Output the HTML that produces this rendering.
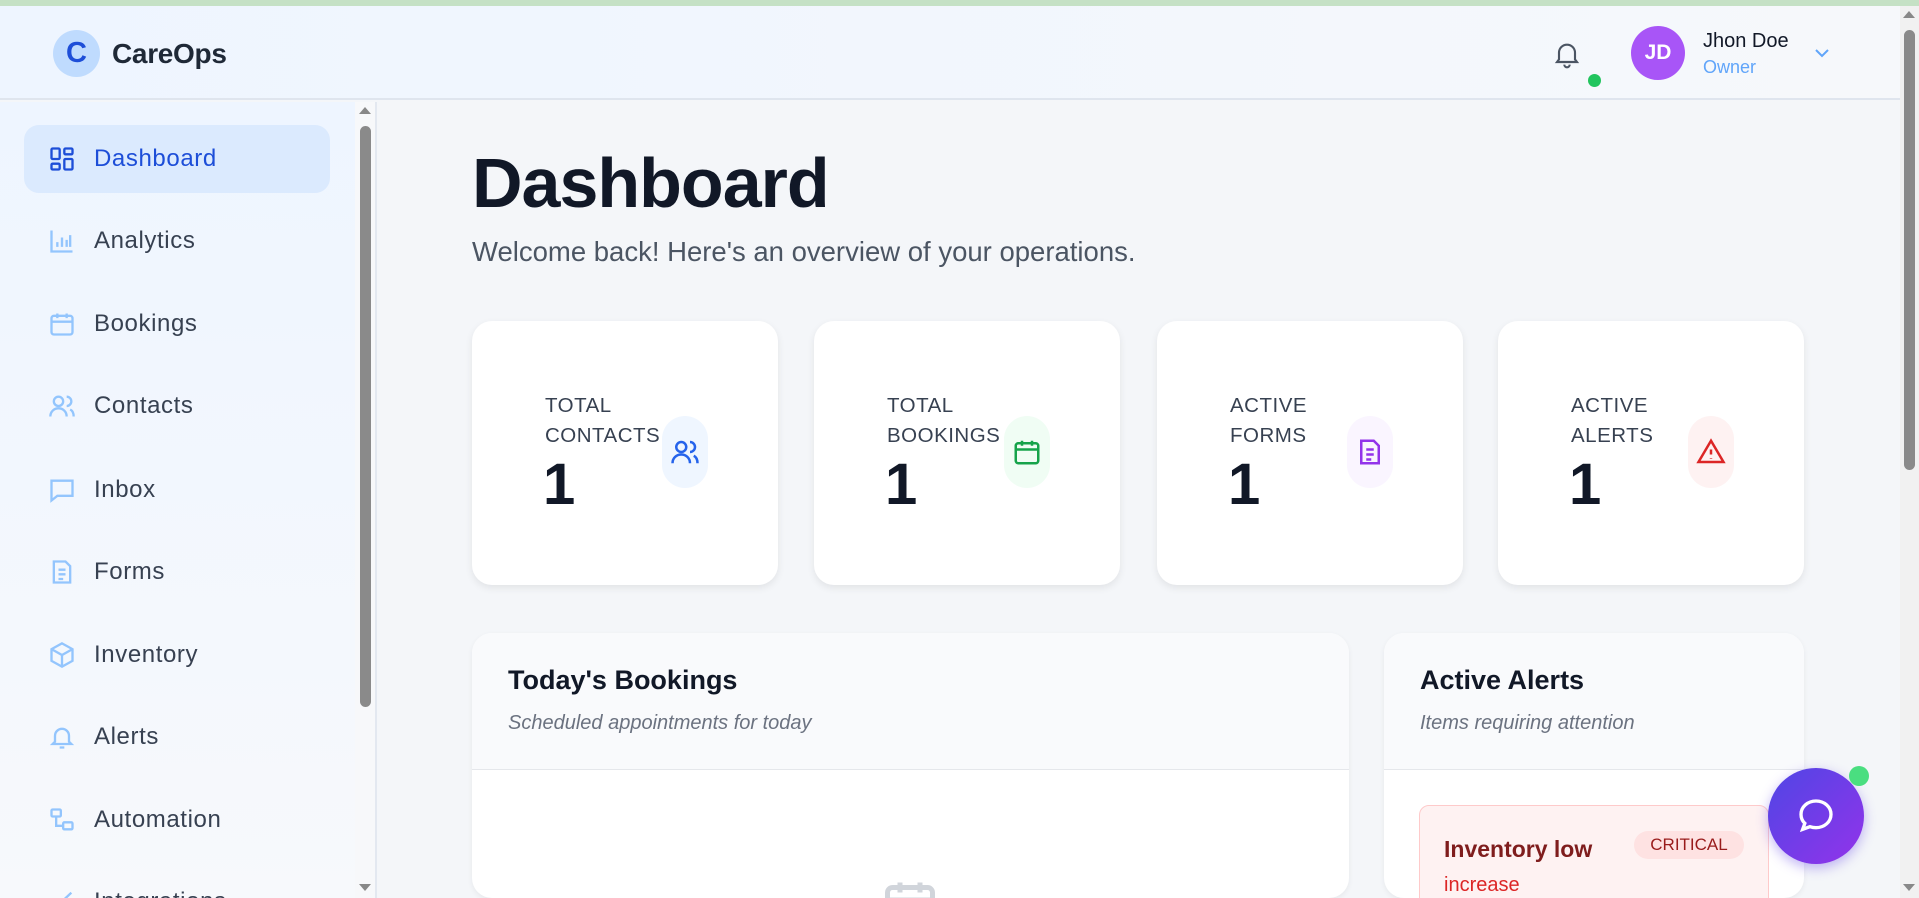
<!DOCTYPE html>
<html style="width:1919px;height:898px;overflow:hidden"><head><meta charset="utf-8"><style>
*{box-sizing:border-box;margin:0;padding:0}
body{width:1919px;height:898px;overflow:hidden;font-family:"Liberation Sans",sans-serif;background:#f4f6f9;position:relative;color:#111827}
.topbar{position:absolute;left:0;top:0;width:1919px;height:6px;background:#c5e1c5}
.header{position:absolute;left:0;top:6px;width:1900px;height:94px;background:linear-gradient(90deg,#eef5ff,#f6f8fb);border-bottom:2px solid #dfe5ee}
.logo{position:absolute;left:53px;top:24px;width:47px;height:47px;border-radius:50%;background:#bfdbfe;color:#1d4ed8;font-weight:bold;font-size:29px;text-align:center;line-height:47px}
.brand{position:absolute;left:112px;top:32px;font-size:28px;font-weight:bold;color:#1f2937;letter-spacing:-.3px}
.side{position:absolute;left:0;top:102px;width:355px;height:796px;background:linear-gradient(180deg,#eef5ff,#f7f9fc);overflow:hidden}
.sscroll{position:absolute;left:355px;top:102px;width:22px;height:796px;background:#f7f8fa;border-right:2px solid #e3e8f0}
.nav{position:absolute;left:24px;width:306px;height:68px;border-radius:15px;display:flex;align-items:center;font-size:24px;letter-spacing:.6px;color:#374151}
.nav svg{position:absolute;left:24px;width:28px;height:28px}
.nav span{position:absolute;left:70px}
.nav.act{background:#dbeafe;color:#1d4ed8}
h1{position:absolute;left:472px;top:143px;font-size:70px;font-weight:bold;color:#111827;letter-spacing:-1px}
.sub{position:absolute;left:472px;top:236px;font-size:27.5px;color:#4b5563}
.card{position:absolute;top:321px;width:306px;height:264px;background:#fff;border-radius:20px;box-shadow:0 3px 8px rgba(0,0,0,.08)}
.lbl{position:absolute;left:73px;top:70px;font-size:20.5px;line-height:30px;color:#374151;letter-spacing:.5px}
.num{position:absolute;left:71px;top:130px;font-size:58px;font-weight:bold;color:#111827}
.pill{position:absolute;left:190px;top:95px;width:46px;height:72px;border-radius:23px;display:flex;align-items:center;justify-content:center}
.panel{position:absolute;top:633px;background:#fff;border-radius:20px;height:265px;box-shadow:0 2px 6px rgba(0,0,0,.06);overflow:hidden}
.ph{height:137px;background:#f9fafc;border-bottom:1px solid #e5e7eb;padding:32px 36px}
.ph b{display:block;font-size:27px;color:#111827}
.ph i{display:block;font-size:20px;color:#6b7280;margin-top:16px}
</style></head><body>
<div class="topbar"></div>
<div class="header">
<div class="logo">C</div><div class="brand">CareOps</div>
<svg style="position:absolute;left:1551px;top:30px" width="32" height="36" viewBox="0 0 24 24" fill="none" stroke="#4b5563" stroke-width="1.6"><path d="M6 16V11a6 6 0 0 1 12 0v5l1.5 2h-15z"/><path d="M10 20a2 2 0 0 0 4 0"/></svg>
<div style="position:absolute;left:1588px;top:68px;width:13px;height:13px;border-radius:50%;background:#22c55e"></div>
<div style="position:absolute;left:1631px;top:20px;width:54px;height:54px;border-radius:50%;background:#a855f7;color:#fff;font-weight:bold;font-size:21px;text-align:center;line-height:54px">JD</div>
<div style="position:absolute;left:1703px;top:24px;font-size:20px;color:#111827">Jhon Doe</div>
<div style="position:absolute;left:1703px;top:51px;font-size:18px;color:#60a5fa">Owner</div>
<svg style="position:absolute;left:1812px;top:40px" width="20" height="14" viewBox="0 0 20 14" fill="none" stroke="#60a5fa" stroke-width="2"><path d="M4 4l6 6 6-6"/></svg>
</div>
<div class="side">
<div class="nav act" style="top:23px"><svg viewBox="0 0 24 24" fill="none" stroke="#1d4ed8" stroke-width="2"><rect x="3" y="3" width="7" height="9" rx="1"/><rect x="14" y="3" width="7" height="5" rx="1"/><rect x="14" y="12" width="7" height="9" rx="1"/><rect x="3" y="16" width="7" height="5" rx="1"/></svg><span>Dashboard</span></div>
<div class="nav" style="top:105px"><svg viewBox="0 0 24 24" fill="none" stroke="#93c5fd" stroke-width="2"><path d="M3 3v18h18M8 17v-4M12 17V9M16 17v-6M19 17V7"/></svg><span>Analytics</span></div>
<div class="nav" style="top:188px"><svg viewBox="0 0 24 24" fill="none" stroke="#93c5fd" stroke-width="2"><rect x="3" y="5" width="18" height="16" rx="2"/><path d="M3 10h18M8 3v4M16 3v4"/></svg><span>Bookings</span></div>
<div class="nav" style="top:270px"><svg viewBox="0 0 24 24" fill="none" stroke="#93c5fd" stroke-width="2"><circle cx="9" cy="8" r="4"/><path d="M2 21c0-4 3-7 7-7s7 3 7 7M16 4a4 4 0 0 1 0 8M19 15c2 1 3 3 3 6"/></svg><span>Contacts</span></div>
<div class="nav" style="top:354px"><svg viewBox="0 0 24 24" fill="none" stroke="#93c5fd" stroke-width="2"><path d="M3 4h18v13H8l-5 4z"/></svg><span>Inbox</span></div>
<div class="nav" style="top:436px"><svg viewBox="0 0 24 24" fill="none" stroke="#93c5fd" stroke-width="2"><path d="M5 3h10l4 4v14H5z M9 10h6M9 14h6M9 18h4"/></svg><span>Forms</span></div>
<div class="nav" style="top:519px"><svg viewBox="0 0 24 24" fill="none" stroke="#93c5fd" stroke-width="2"><path d="M12 2l9 5v10l-9 5-9-5V7z M3 7l9 5 9-5M12 12v10"/></svg><span>Inventory</span></div>
<div class="nav" style="top:601px"><svg viewBox="0 0 24 24" fill="none" stroke="#93c5fd" stroke-width="2"><path d="M6 16V11a6 6 0 0 1 12 0v5l2 2H4z M10 21h4"/></svg><span>Alerts</span></div>
<div class="nav" style="top:684px"><svg viewBox="0 0 24 24" fill="none" stroke="#93c5fd" stroke-width="2"><rect x="3" y="3" width="8" height="6" rx="1"/><rect x="13" y="14" width="8" height="6" rx="1"/><path d="M7 9v8h6"/></svg><span>Automation</span></div>
<div class="nav" style="top:766px"><svg viewBox="0 0 24 24" fill="none" stroke="#93c5fd" stroke-width="2"><path d="M3 20L20 4"/></svg><span>Integrations</span></div>
</div>
<div class="sscroll"><div style="position:absolute;left:5px;top:24px;width:11px;height:581px;border-radius:6px;background:#8a8a8a"></div>
<div style="position:absolute;left:4px;top:5px;border:6px solid transparent;border-bottom:7px solid #888;border-top:0"></div>
<div style="position:absolute;left:4px;top:782px;border:6px solid transparent;border-top:7px solid #888;border-bottom:0"></div></div>
<h1>Dashboard</h1>
<div class="sub">Welcome back! Here's an overview of your operations.</div>
<div class="card" style="left:472px"><div class="lbl">TOTAL<br>CONTACTS</div><div class="num">1</div><div class="pill" style="background:#eff6ff"><svg width="30" height="30" viewBox="0 0 24 24" fill="none" stroke="#2563eb" stroke-width="2"><circle cx="9" cy="8" r="4"/><path d="M2 21c0-4 3-7 7-7s7 3 7 7M16 4a4 4 0 0 1 0 8M19 15c2 1 3 3 3 6"/></svg></div></div>
<div class="card" style="left:814px"><div class="lbl">TOTAL<br>BOOKINGS</div><div class="num">1</div><div class="pill" style="background:#f0fdf4"><svg width="30" height="30" viewBox="0 0 24 24" fill="none" stroke="#16a34a" stroke-width="2"><rect x="3" y="5" width="18" height="16" rx="2"/><path d="M3 10h18M8 3v4M16 3v4"/></svg></div></div>
<div class="card" style="left:1157px"><div class="lbl">ACTIVE<br>FORMS</div><div class="num">1</div><div class="pill" style="background:#faf5ff"><svg width="30" height="30" viewBox="0 0 24 24" fill="none" stroke="#9333ea" stroke-width="2"><path d="M5 3h10l4 4v14H5z M9 10h6M9 14h6M9 18h4"/></svg></div></div>
<div class="card" style="left:1498px"><div class="lbl">ACTIVE<br>ALERTS</div><div class="num">1</div><div class="pill" style="background:#fef2f2"><svg width="32" height="30" viewBox="0 0 24 24" fill="none" stroke="#dc2626" stroke-width="2"><path d="M12 3L2 20h20z M12 10v4M12 17v.5"/></svg></div></div>
<div class="panel" style="left:472px;width:877px"><div class="ph"><b>Today's Bookings</b><i>Scheduled appointments for today</i></div>
<svg style="position:absolute;left:398px;top:242px" width="80" height="60" viewBox="0 0 24 24" fill="none" stroke="#d1d5db" stroke-width="2"><rect x="3" y="5" width="18" height="16" rx="2"/><path d="M3 10h18M8 3v4M16 3v4"/></svg></div>
<div class="panel" style="left:1384px;width:420px"><div class="ph"><b>Active Alerts</b><i>Items requiring attention</i></div>
<div style="position:absolute;left:35px;top:172px;width:350px;height:120px;background:#fef2f2;border:1px solid #fecaca;border-radius:10px">
<div style="position:absolute;left:24px;top:30px;font-size:23px;font-weight:bold;color:#7f1d1d">Inventory low</div>
<div style="position:absolute;left:214px;top:25px;width:110px;height:28px;border-radius:14px;background:#fee2e2;color:#991b1b;font-size:17px;text-align:center;line-height:28px">CRITICAL</div>
<div style="position:absolute;left:24px;top:68px;font-size:20px;color:#dc2626">increase</div></div></div>
<div style="position:absolute;left:1768px;top:768px;width:96px;height:96px;border-radius:50%;background:linear-gradient(135deg,#4f46e5,#9333ea);box-shadow:0 4px 12px rgba(99,70,230,.4)"><svg style="position:absolute;left:28px;top:28px" width="40" height="40" viewBox="0 0 24 24" fill="none" stroke="#fff" stroke-width="2"><path d="M12 3c5 0 9 3.5 9 8s-4 8-9 8c-1.3 0-2.5-.2-3.6-.6L4 20l1.3-3.6C3.8 15 3 13.1 3 11c0-4.5 4-8 9-8z"/></svg></div>
<div style="position:absolute;left:1849px;top:766px;width:20px;height:20px;border-radius:50%;background:#4ade80"></div>
<div style="position:absolute;left:1900px;top:6px;width:19px;height:892px;background:#f1f1f1"><div style="position:absolute;left:4px;top:24px;width:11px;height:440px;border-radius:6px;background:#8a8a8a"></div>
<div style="position:absolute;left:3px;top:5px;border:6px solid transparent;border-bottom:7px solid #888;border-top:0"></div>
<div style="position:absolute;left:3px;top:878px;border:6px solid transparent;border-top:7px solid #888;border-bottom:0"></div></div>
</body></html>
